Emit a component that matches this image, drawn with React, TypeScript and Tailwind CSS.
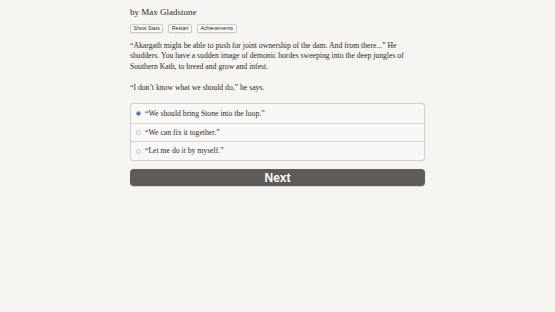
import { useState } from "react";

const choices = [
  "\u201CWe should bring Stone into the loop.\u201D",
  "\u201CWe can fix it together.\u201D",
  "\u201CLet me do it by myself.\u201D",
];

const App = () => {
  const [selected, setSelected] = useState(0);

  return (
    <div className="min-h-[312px] w-full bg-[#f7f5f2] text-[#2f2a28] [font-family:'Liberation_Serif',serif]">
      <div className="mx-auto w-[295px] pt-[6px]">
        {/* Byline */}
        <div className="text-[9px] leading-[12px]">by Max Gladstone</div>

        {/* Toolbar */}
        <div className="mt-[6px] flex gap-[5px] [font-family:'Liberation_Sans',sans-serif]">
          {["Show Stats", "Restart", "Achievements"].map((b) => (
            <button
              key={b}
              className="h-[9px] rounded-[2px] border border-[#cfcbc7] bg-[#fbfaf9] px-[2.5px] text-[5.2px] leading-[7px] text-[#2f2a28] shadow-[0_0.5px_0.5px_rgba(0,0,0,0.1)]"
            >
              {b}
            </button>
          ))}
        </div>

        {/* Passage */}
        <div className="mt-[7.5px] text-[7.7px] leading-[10.5px]">
          <p>
            “Akargath might be able to push for joint ownership of the dam. And from there...” He
            <br />
            shudders. You have a sudden image of demonic hordes sweeping into the deep jungles of
            <br />
            Southern Kath, to breed and grow and infest.
          </p>
          <p className="mt-[10.5px]">“I don’t know what we should do,” he says.</p>
        </div>

        {/* Choices */}
        <div className="mt-[10px] overflow-hidden rounded-[3px] border border-[#d3cfcb] bg-[#f9f8f6] shadow-[0_0_1px_rgba(0,0,0,0.08)]">
          {choices.map((c, i) => (
            <label
              key={c}
              onClick={() => setSelected(i)}
              className={`flex h-[18.7px] items-center gap-[4px] px-[5px] text-[7.7px] ${
                i > 0 ? "border-t border-[#d8d4d0]" : ""
              }`}
            >
              <span
                className={`flex h-[5px] w-[5px] items-center justify-center rounded-full border ${
                  selected === i ? "border-[#8aa2c4] bg-[#e6edf7]" : "border-[#c6c2be] bg-white"
                }`}
              >
                {selected === i && <span className="h-[2.5px] w-[2.5px] rounded-full bg-[#3d5f93]" />}
              </span>
              <span>{c}</span>
            </label>
          ))}
        </div>

        {/* Next */}
        <button className="mt-[8px] flex h-[17px] w-full items-center justify-center rounded-[4px] bg-[#5e5b58] text-[12px] font-bold text-white shadow-[0_1px_1px_rgba(0,0,0,0.15)] [font-family:'Liberation_Sans',sans-serif]">
          Next
        </button>
      </div>
    </div>
  );
};

export default App;
